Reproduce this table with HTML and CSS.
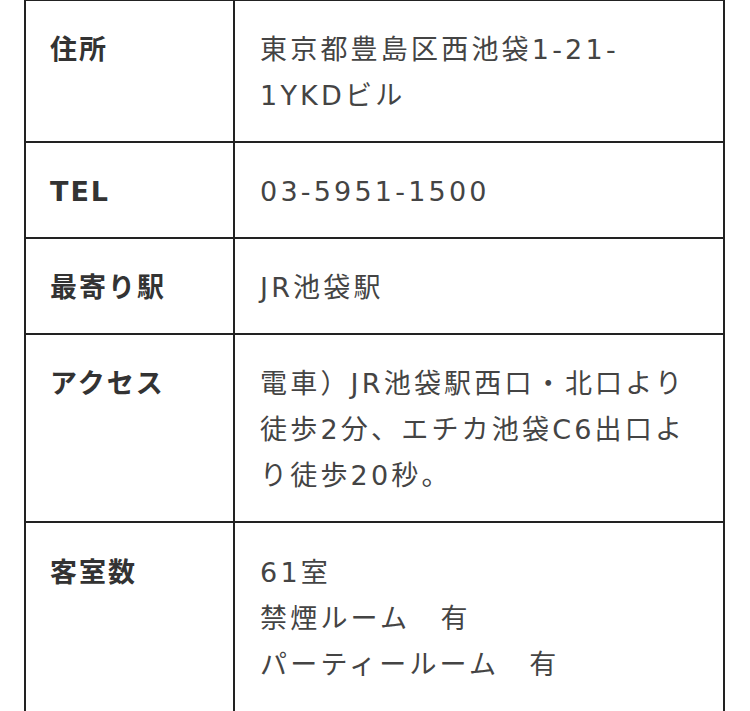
FILE: index.html
```html
<!DOCTYPE html>
<html lang="ja">
<head>
<meta charset="utf-8">
<title>ホテル概要</title>
<link rel="stylesheet" href="styles.css">
</head>
<body>
<table class="info">
  <tbody>
    <tr>
      <th class="label">住所</th>
      <td class="value">東京都豊島区西池袋1-21-<br>1YKDビル</td>
    </tr>
    <tr>
      <th class="label">TEL</th>
      <td class="value">03-5951-1500</td>
    </tr>
    <tr>
      <th class="label">最寄り駅</th>
      <td class="value">JR池袋駅</td>
    </tr>
    <tr>
      <th class="label">アクセス</th>
      <td class="value">電車）JR池袋駅西口・北口より徒歩2分、エチカ池袋C6出口より徒歩20秒。</td>
    </tr>
    <tr class="last">
      <th class="label">客室数</th>
      <td class="value">61室<br>禁煙ルーム　有<br>パーティールーム　有</td>
    </tr>
  </tbody>
</table>
</body>
</html>
```

FILE: styles.css
```css
html, body {
  margin: 0;
  padding: 0;
  background: #ffffff;
}

.info {
  border-collapse: separate;
  border-spacing: 0;
  margin: -1px 0 0 24px;
  width: 701px;
  table-layout: fixed;
  border-top: 2px solid #222222;
  border-left: 2px solid #222222;
}

.label,
.value {
  vertical-align: top;
  text-align: left;
  border-right: 2px solid #222222;
  border-bottom: 2px solid #222222;
  line-height: 46px;
  padding-top: 26px;
  padding-bottom: 22px;
}

.last .label,
.last .value {
  padding-top: 27px;
  padding-bottom: 30px;
}

.label {
  width: 183px;
  padding-left: 24px;
  padding-right: 0;
  font-family: "DejaVu Sans", "Noto Sans CJK JP", sans-serif;
  font-weight: 700;
  font-size: 27px;
  letter-spacing: 2px;
  color: #333333;
}

.value {
  padding-left: 25px;
  padding-right: 23px;
  font-family: "DejaVu Sans", "Noto Sans CJK JP", sans-serif;
  font-weight: 400;
  font-size: 27px;
  letter-spacing: 3.2px;
  color: #444444;
}
```
